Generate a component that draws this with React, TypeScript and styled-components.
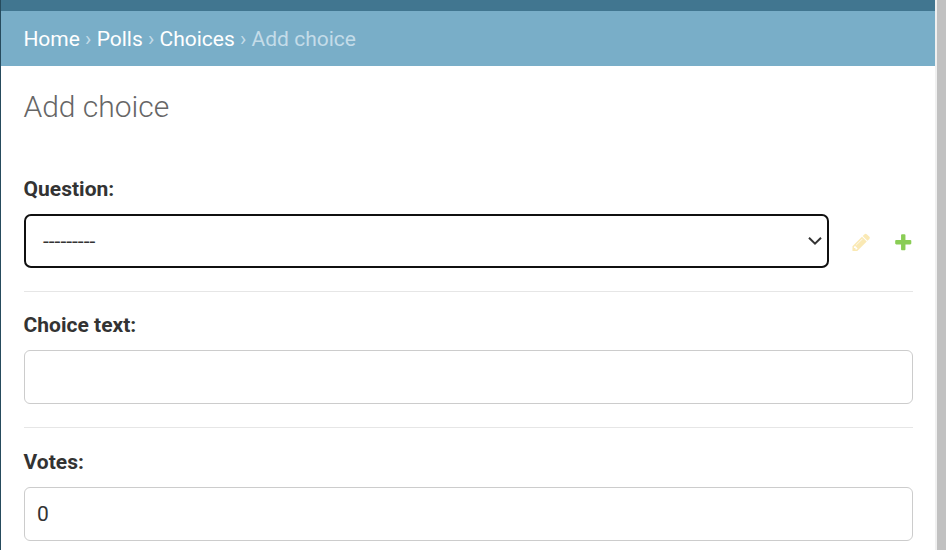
import React from "react";
import styled, { createGlobalStyle } from "styled-components";

const GlobalStyle = createGlobalStyle`
  * { box-sizing: border-box; }
  body {
    margin: 0;
    overflow: hidden;
    background: #fff;
    color: #333;
    font-family: Roboto, "Liberation Sans", sans-serif;
    font-size: 21px;
  }
`;

const Page = styled.div`
  display: flex;
  height: 550px;
  border-left: 1px solid #264b5d;
`;

const Main = styled.div`
  flex: 1;
  min-width: 0;
  overflow: hidden;
`;

const ScrollTrack = styled.div`
  width: 11px;
  background: #c1c1c1;
  border-left: 2px solid #f0f0f0;
`;

const HeaderBar = styled.div`
  height: 11px;
  background: #417690;
`;

const Breadcrumbs = styled.nav`
  display: flex;
  align-items: center;
  height: 55px;
  padding: 0 22.4px;
  background: #79aec8;
  color: #c4dce8;
  white-space: pre;
  line-height: 24px;
`;

const Crumb = styled.a`
  color: #fff;
`;

const Content = styled.main`
  padding: 22px 22px 0 23px;
`;

const Title = styled.h1`
  margin: 0 0 38px -0.6px;
  height: 38px;
  line-height: 38px;
  font-size: 30px;
  font-weight: 300;
  color: #666;
`;

const FormRow = styled.div<{ $height: number; $top: number }>`
  height: ${(p) => p.$height}px;
  padding-top: ${(p) => p.$top}px;
  border-bottom: 1px solid #e6e6e6;
`;

const Label = styled.label`
  display: block;
  height: 26px;
  margin: 0 0 12px -0.4px;
  line-height: 26px;
  font-size: 21px;
  font-weight: 700;
`;

const Related = styled.div`
  display: flex;
  align-items: center;
`;

const SelectBox = styled.div`
  display: flex;
  align-items: center;
  justify-content: space-between;
  width: 805px;
  height: 54px;
  padding: 0 5px 0 17px;
  border: 2px solid #101010;
  border-radius: 7px;
`;

const SelectValue = styled.span`
  font-size: 21px;
  line-height: 24px;
`;

const Input = styled.input`
  display: block;
  width: 100%;
  height: 54px;
  padding: 0 12px;
  border: 1px solid #ccc;
  border-radius: 6px;
  outline: none;
  background: #fff;
  color: #333;
  font: inherit;
`;

const Icon = styled.svg<{ $gap: number; $faded?: boolean }>`
  flex: none;
  width: 20.5px;
  height: 20.5px;
  margin: 3px 0 0 ${(p) => p.$gap}px;
  opacity: ${(p) => (p.$faded ? 0.3 : 1)};
`;

const Crumbs = ["Home", "Polls", "Choices"];

export default function App() {
  return (
    <Page>
      <GlobalStyle />
      <Main>
        <HeaderBar />
        <Breadcrumbs>
          {Crumbs.map((name) => (
            <React.Fragment key={name}>
              <Crumb>{name}</Crumb>
              <span>{" › "}</span>
            </React.Fragment>
          ))}
          <span>Add choice</span>
        </Breadcrumbs>
        <Content>
          <Title>Add choice</Title>
          <FormRow $height={128} $top={12}>
            <Label>Question:</Label>
            <Related>
              <SelectBox>
                <SelectValue>---------</SelectValue>
                <svg width="14" height="10" viewBox="0 0 14 10" fill="none" stroke="#333" strokeWidth="2">
                  <path d="M1 1.7 L7 7.7 L13 1.7" />
                </svg>
              </SelectBox>
              <Icon $gap={22.5} $faded viewBox="0 0 1792 1792" fill="#efb80b">
                <path d="M491 1536l91-91-235-235-91 91v107h128v128h107zm523-928q0-22-22-22-10 0-17 7l-542 542q-7 7-7 17 0 22 22 22 10 0 17-7l542-542q7-7 7-17zm-54-192l416 416-832 832h-416v-416zm683 96q0 53-37 90l-166 166-416-416 166-165q36-38 90-38 53 0 91 38l235 234q37 39 37 91z" />
              </Icon>
              <Icon $gap={21} viewBox="0 0 1792 1792" fill="#8acd55">
                <path d="M1600 796v192q0 40-28 68t-68 28h-416v416q0 40-28 68t-68 28h-192q-40 0-68-28t-28-68v-416h-416q-40 0-68-28t-28-68v-192q0-40 28-68t68-28h416v-416q0-40 28-68t68-28h192q40 0 68 28t28 68v416h416q40 0 68 28t28 68z" />
              </Icon>
            </Related>
          </FormRow>
          <FormRow $height={136} $top={20}>
            <Label htmlFor="choice">Choice text:</Label>
            <Input id="choice" />
          </FormRow>
          <FormRow $height={137} $top={21}>
            <Label htmlFor="votes">Votes:</Label>
            <Input id="votes" defaultValue="0" />
          </FormRow>
        </Content>
      </Main>
      <ScrollTrack />
    </Page>
  );
}
